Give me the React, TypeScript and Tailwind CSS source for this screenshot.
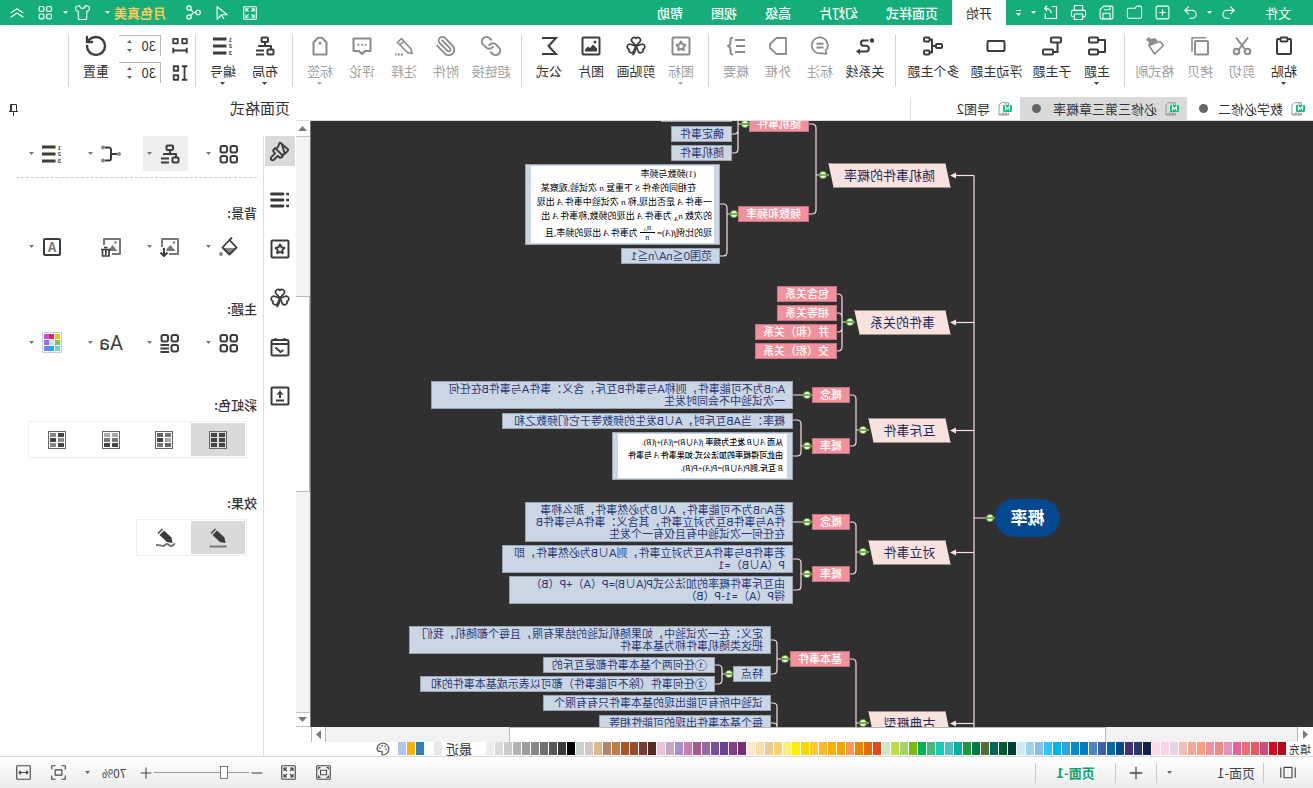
import { useState, type ReactNode } from "react";
import { Folder, Link, Paperclip, Palette, Printer, Redo2, RotateCw, Save, Shirt, SquarePlus, Undo2, Paintbrush } from "lucide-react";

/* ---------- icons ---------- */

function Glyph({ children, size = 20, width = 2 }: { children: ReactNode; size?: number; width?: number }) {
  return (
    <svg width={size} height={size} viewBox="0 0 20 20" fill="none" stroke="currentColor" strokeWidth={width} strokeLinejoin="round" aria-hidden="true">
      {children}
    </svg>
  );
}

function Caret({ className = "text-[#666]" }: { className?: string }) {
  return (
    <svg width="5" height="3" viewBox="0 0 5 3" className={className} aria-hidden="true">
      <path d="M0 0h5L2.5 3z" fill="currentColor" />
    </svg>
  );
}

const heart = "M10 9.8 6 5.600a2.600 2.600 0 0 1 4-3.300 2.600 2.600 0 0 1 4 3.300z";

const icons: Record<string, ReactNode> = {
  paste: <><rect x="3" y="3" width="14" height="15" rx="1" /><rect x="6.5" y="1.5" width="7" height="4" rx="1" fill="white" /></>,
  cut: <><path d="M4 1.5 13.5 14M16 1.5 6.5 14" /><circle cx="4.5" cy="15.5" r="2.8" /><circle cx="15.5" cy="15.5" r="2.8" /></>,
  copy: <><rect x="2" y="5" width="13" height="13.5" rx="1" /><path d="M4 1.8h14v14" strokeWidth="1.6" /></>,
  format: <><path d="M5 5.5 1.5 9.5l9 8.5L16 9.5z" strokeWidth="1.6" /><path d="m7 5 10 5-1-4 3-2-2.4-3L14 3l-4-1z" fill="currentColor" stroke="none" /></>,
  topic: <><rect x="9" y="1.5" width="9" height="5" rx="1" /><rect x="9" y="13.5" width="9" height="5" rx="1" /><path d="M9 4H2v12h7" /></>,
  subtopic: <><rect x="1" y="1.5" width="10" height="5" rx="1" /><rect x="9" y="13.5" width="10" height="5" rx="1" /><path d="M4.5 6.500v9.500H9" /></>,
  floating: <rect x="1.500" y="5" width="17" height="10" rx="1" />,
  multi: <><rect x="1" y="8" width="6" height="4" rx="1" /><path d="M7 10h4M13.500 3.500H11v13h2.500" /><rect x="13.500" y="1.500" width="5.500" height="4" rx="1" /><rect x="13.500" y="14.500" width="5.500" height="4" rx="1" /></>,
  relation: <><circle cx="3" cy="4.500" r="1.200" fill="currentColor" /><path d="M6.500 4.500h5a2.600 2.600 0 0 1 0 5.200H9a2.900 2.900 0 0 0 0 5.800h6" /><path d="m15 12.500 4 3-4 3z" fill="currentColor" stroke="none" /></>,
  callout: <><path d="M4.500 15a8 8 0 1 1 4 2.200L3.500 18z" strokeWidth="1.700" /><path d="M6.500 7.800h7M6.500 11.500h7" /></>,
  boundary: <path d="M2 2h9.500l6.500 6v4l-6.500 6H2z" strokeWidth="1.800" />,
  summary: <path d="M1 4h10M1 10h9M1 16h10M13 1.500c3 0 2.500 2 2.500 4.500s.5 3.500 2.500 4c-2 .5-2.500 1.500-2.500 4s.5 4.500-2.500 4.500" />,
  mark: <><rect x="1.500" y="1.500" width="17" height="17" rx="1" /><path d="m10 5.500 1.500 2.800 3 .6-2.100 2.200.4 3.100-2.800-1.300-2.800 1.300.4-3.100-2.100-2.200 3-.6z" /></>,
  clover: <g strokeWidth="1.700"><path d={heart} /><path d={heart} transform="rotate(-115 10 10)" /><path d={heart} transform="rotate(115 10 10)" /><path d="M10 10c0 4 .8 6.500 3.500 9" /></g>,
  picture: <><rect x="1.500" y="1.500" width="17" height="17" rx="1" /><path d="M4 15.500v-3l4-4 3 3.500 2-1.500 3 3v2z" fill="currentColor" stroke="none" /><circle cx="6" cy="6" r="1.500" fill="currentColor" stroke="none" /></>,
  formula: <path d="M17 2H3l7.500 8L3 18h14" strokeLinejoin="miter" />,
  note: <><path d="m12.500 2.500 4 4-10 10-4.500 1 1-4.500zM10 5l4 4" strokeWidth="1.700" /><path d="M11 18.500h8" strokeDasharray="2 1.200" /></>,
  comment: <><path d="M1.500 2.500h17V15H13l-3 3-3-3H1.500z" /><path d="M5.500 8.800h9" strokeDasharray="1.800 1.800" /></>,
  tag: <><path d="M3.500 6.500 8 1.800h4l4.500 4.700v12h-13z" /><circle cx="10" cy="7" r="1.600" fill="currentColor" stroke="none" /></>,
  layout: <><rect x="7" y="1.500" width="6.500" height="4.500" rx="1" /><path d="M10 6v4M4 13v-3h12v1M11 14.500h8M11 18.500h8" /><rect x="1.500" y="13.500" width="6" height="5" rx="1" /></>,
  numbering: <><path d="M6.500 3H20M6.500 10H20M6.500 17H20" strokeWidth="2.800" /><g fill="currentColor" stroke="none" fontSize="6" fontWeight="700" className="font-['Liberation_Sans',sans-serif]"><text x="1" y="5.500">1</text><text x="1" y="12">2</text><text x="1" y="18.500">3</text></g></>,
  gapX: <><rect x="2.500" y="2" width="5" height="5" /><rect x="12.500" y="2" width="5" height="5" /><path d="M2.500 12v6M17.500 12v6M2.500 15h15" /></>,
  gapY: <><rect x="12" y="2.500" width="5" height="5" /><rect x="12" y="12.500" width="5" height="5" /><path d="M2 2.500h6M2 17.500h6M5 2.500v15" /></>,
  grid: <><rect x="2" y="2" width="6.500" height="6.500" rx="2" /><rect x="12" y="2" width="6.500" height="6.500" rx="2" /><rect x="2" y="12" width="6.500" height="6.500" rx="2" /><rect x="12" y="12" width="6.500" height="6.500" rx="2" /></>,
  gridLines: <><rect x="2" y="2" width="6.500" height="6.500" rx="2" /><rect x="12" y="2" width="6.500" height="6.500" rx="2" /><rect x="2" y="12" width="6.500" height="6.500" rx="2" /><path d="M11 12h8.500M11 15.500h8.500M11 19h8.500" /></>,
  connector: <><path d="M4 10h5M16 3.500h-4a2 2 0 0 0-2 2v9a2 2 0 0 0 2 2h4" /><g fill="#888" stroke="none"><circle cx="2" cy="10" r="2" /><circle cx="18" cy="3.500" r="2" /><circle cx="18" cy="16.500" r="2" /></g></>,
  bullets: <><path d="M7 4h11.500M7 10h11.500M7 16h11.500" strokeWidth="2.800" strokeLinecap="round" /><path d="M1 4h2.800M1 10h2.800M1 16h2.800" strokeWidth="2.600" /></>,
  calendar: <><rect x="1.500" y="3" width="17" height="15.500" rx="1.500" /><path d="M5.500 1v3M14.500 1v3M2 7h16M6.500 13l3 2 5-4.500" /></>,
  upload: <><rect x="1.500" y="1.500" width="17" height="17" rx="1" /><path d="M6 14.500h8M10 12V7" /><path d="m6.500 8.500 3.500-4 3.500 4z" fill="currentColor" stroke="none" /></>,
  bucket: <><path d="M3 11h13l-6.500 6z" fill="#888" stroke="none" /><path d="m9.500 3 7 7.500-7 7-7-7zM9.500 3 7 .5" strokeWidth="1.800" /><circle cx="18" cy="17" r="2" fill="#888" stroke="none" /></>,
  imageDown: <><path d="M11 17H2V2h16v8" stroke="#777" /><path d="m4.500 14 5-6 4 4v2z" fill="#777" stroke="none" /><circle cx="6" cy="5.500" r="1.200" fill="#777" stroke="none" /><path d="M16 11v7M12.500 15.500 16 19l3.500-3.500" /></>,
  imageTrash: <><path d="M9 17H1V2h16v6" stroke="#777" /><path d="m3.500 14 5-6 3 4v2z" fill="#777" stroke="none" /><circle cx="5.500" cy="5.500" r="1.200" fill="#777" stroke="none" /><path d="M10.500 12.500h9.500M13.500 10.500h3.500M12 13v6h6.500v-6M15.200 13v5" strokeWidth="1.700" /></>,
  screenOut: <><rect x="1" y="1" width="18" height="18" rx="1" /><path d="M4 8V4h4M4 4l4 4M16 8V4h-4M16 4l-4 4M4 12v4h4M4 16l4-4M16 12v4h-4M16 16l-4-4" /></>,
  screenFit: <><rect x="1" y="1" width="18" height="18" rx="1" /><rect x="6" y="7" width="8" height="6" /><path d="M3.500 6V3.500H6M14 3.500h2.500V6M3.500 14v2.500H6M14 16.500h2.500V14" /></>,
  corners: <><path d="M1 6V1h5M14 1h5v5M1 14v5h5M14 19h5v-5" /><rect x="5.500" y="6.500" width="9" height="7" /></>,
  fitWidth: <><rect x="1" y="1" width="18" height="18" rx="1" /><path d="M4 10h12M6.500 7.500 4 10l2.500 2.500M13.500 7.500 16 10l-2.500 2.500" /></>,
  pageView: <><rect x="5" y="3" width="10" height="13" /><path d="M1 3v13M19 3v13" /></>,
  pointer: <path d="M17 1v18l-6-6.500H2.500zM11 12.500 7 18.500" />,
  share: <><circle cx="4" cy="10" r="3" /><circle cx="16" cy="4" r="2.800" /><circle cx="16" cy="16" r="2.800" /><path d="M7 10h3l3.500-4M10 10l3.500 4" /></>,
  collapse: <path d="m1 10 9-6 9 6M1 16l9-6 9 6" />,
  exportBox: <path d="M8 2H2v16h15v-7M9 11c0-4 3-6.500 9-6.500M14.500 1 18 4.500 14.500 8" />,
};

/* ---------- header ---------- */

const menuTabs = ["页面样式", "幻灯片", "高级", "视图", "帮助"];

function TitleBar() {
  return (
    <header className="h-[25px] shrink-0 flex items-center bg-[#16ae78] text-white text-[13px]">
      <button className="w-[70px] text-center">文件</button>
      <div className="flex items-center gap-[11px] pl-1.5">
        <button aria-label="撤销"><Undo2 size={17} strokeWidth={1.5} /></button>
        <Caret className="text-white -mx-[3px]" />
        <button aria-label="重做"><Redo2 size={17} strokeWidth={1.5} /></button>
        <button aria-label="新建"><SquarePlus size={17} strokeWidth={1.5} /></button>
        <button aria-label="打开"><Folder size={17} strokeWidth={1.5} /></button>
        <button aria-label="保存"><Save size={17} strokeWidth={1.5} /></button>
        <button aria-label="打印"><Printer size={17} strokeWidth={1.5} /></button>
        <button className="px-px" aria-label="导出"><Glyph size={15} width={1.6}>{icons.exportBox}</Glyph></button>
      </div>
      <div className="flex items-center gap-2.5 pl-1.5 pr-2.5">
        <Caret className="text-white" />
        <span className="flex flex-col items-center gap-0.5">
          <span className="w-[5px] h-px bg-white" />
          <Caret className="text-white" />
        </span>
      </div>
      <button className="h-full w-[54px] bg-white text-[#333]">开始</button>
      <nav className="flex items-center gap-7 pl-[14px] font-medium">
        {menuTabs.map((t) => <button key={t}>{t}</button>)}
      </nav>
      <div className="ml-auto flex items-center gap-[14px] pr-2.5">
        <button aria-label="全屏"><Glyph size={14} width={1.5}>{icons.screenOut}</Glyph></button>
        <button aria-label="演示"><Glyph size={14} width={1.6}>{icons.pointer}</Glyph></button>
        <button aria-label="分享"><Glyph size={15} width={1.6}>{icons.share}</Glyph></button>
        <button className="flex items-center gap-1 pl-1.5 font-bold text-[#f8c95c]">月色真美<Caret className="text-white" /></button>
        <div className="flex items-center gap-2.5">
          <button className="flex items-center gap-1.5" aria-label="主题皮肤"><Shirt size={17} strokeWidth={1.5} /><Caret className="text-white" /></button>
          <button aria-label="应用"><Glyph size={15} width={1.6}>{icons.grid}</Glyph></button>
        </div>
        <button aria-label="收起"><Glyph size={14} width={1.6}>{icons.collapse}</Glyph></button>
      </div>
    </header>
  );
}

/* ---------- ribbon ---------- */

type Tool = { label: string; icon: ReactNode; off?: boolean; menu?: boolean };

const g = (name: string) => <Glyph>{icons[name]}</Glyph>;

const toolGroups: Tool[][] = [
  [
    { label: "粘贴", icon: g("paste"), menu: true },
    { label: "剪切", icon: g("cut"), off: true },
    { label: "拷贝", icon: g("copy"), off: true },
    { label: "格式刷", icon: g("format"), off: true },
  ],
  [
    { label: "主题", icon: g("topic"), menu: true },
    { label: "子主题", icon: g("subtopic") },
    { label: "浮动主题", icon: g("floating") },
    { label: "多个主题", icon: g("multi") },
  ],
  [
    { label: "关系线", icon: g("relation") },
    { label: "标注", icon: g("callout"), off: true },
    { label: "外框", icon: g("boundary"), off: true },
    { label: "概要", icon: g("summary"), off: true },
  ],
  [
    { label: "图标", icon: g("mark"), off: true, menu: true },
    { label: "剪贴画", icon: g("clover") },
    { label: "图片", icon: g("picture") },
    { label: "公式", icon: g("formula") },
  ],
  [
    { label: "超链接", icon: <Link size={22} strokeWidth={2.2} />, off: true },
    { label: "附件", icon: <Paperclip size={22} strokeWidth={2} />, off: true },
    { label: "注释", icon: g("note"), off: true },
    { label: "评论", icon: g("comment"), off: true },
    { label: "标签", icon: g("tag"), off: true, menu: true },
  ],
  [
    { label: "布局", icon: g("layout"), menu: true },
    { label: "编号", icon: g("numbering"), menu: true },
  ],
];

const toolWidth = ["", "", "w-[42px]", "w-12", "w-[63px]"];

function ToolButton({ tool }: { tool: Tool }) {
  return (
    <button className={`${toolWidth[tool.label.length]} shrink-0 flex flex-col items-center pt-[11px] ${tool.off ? "text-[#8c8c8c]" : "text-[#3c3c3c]"}`}>
      <span className="h-5 flex items-center">{tool.icon}</span>
      <span className={`mt-1.5 text-[13px] leading-[18px] whitespace-nowrap ${tool.off ? "text-[#a0a0a0]" : "text-[#333]"}`}>{tool.label}</span>
      {tool.menu && <span className="mt-0.5"><Caret className={tool.off ? "text-[#aaa]" : "text-[#444]"} /></span>}
    </button>
  );
}

const Divider = () => <span className="mx-1.5 mt-2.5 h-[52px] w-px shrink-0 bg-[#d4d4d4]" />;

function SpacingField({ icon, label }: { icon: string; label: string }) {
  const [value, setValue] = useState("30");
  return (
    <label className="flex items-center gap-2.5 h-[27px] text-[#3c3c3c]">
      <Glyph size={18}>{icons[icon]}</Glyph>
      <span className="flex items-center w-[42px] h-[21px] border-t border-l border-[#b8b8b8]">
        <input aria-label={label} value={value} onChange={(e) => setValue(e.target.value)} className="w-7 pl-1 text-[13px] leading-5 text-[#333] bg-transparent outline-none" />
        <span className="flex flex-col gap-1.5">
          <span className="rotate-180 flex"><Caret /></span>
          <Caret />
        </span>
      </span>
    </label>
  );
}

function Ribbon() {
  return (
    <div className="h-[70px] shrink-0 flex items-start bg-white pl-2 overflow-hidden">
      {toolGroups.map((group, i) => (
        <div key={i} className="flex items-start">
          {group.map((t) => <ToolButton key={t.label} tool={t} />)}
          <Divider />
        </div>
      ))}
      <div className="pt-[7px] flex flex-col">
        <SpacingField icon="gapX" label="水平间距" />
        <SpacingField icon="gapY" label="垂直间距" />
      </div>
      <div className="flex items-start pl-0.5">
        <ToolButton tool={{ label: "重置", icon: <RotateCw size={24} strokeWidth={2.4} /> }} />
        <Divider />
      </div>
    </div>
  );
}

/* ---------- document tabs ---------- */

const docs = [
  { name: "数学必修二", dirty: true },
  { name: "必修三第三章概率", dirty: true, active: true },
  { name: "导图2" },
];

function DocIcon() {
  return (
    <svg width="14" height="14" viewBox="0 0 14 14" aria-hidden="true">
      <path d="M3.500 3V.7h7L13 3v10H3.500v-2M6 .7v12M9 10v3M3.500 12h9" fill="none" stroke="#999" />
      <rect x="0" y="3" width="9" height="7" rx="1" fill="#10c17c" />
      <path d="M2.500 8.500v-4L4.500 7l2-2.500v4" fill="none" stroke="white" strokeWidth="1.200" />
    </svg>
  );
}

function DocTabs() {
  return (
    <div className="h-[26px] shrink-0 flex items-end bg-white border-b border-[#dcdcdc] text-[13px] text-[#333]">
      {docs.map((d) => (
        <button key={d.name} className={`h-[23px] flex items-center pl-2 pr-3 ${d.active ? "bg-[#dadada] w-[167px]" : d.dirty ? "w-[126px]" : "w-[110px] border-r border-[#dcdcdc]"}`}>
          <DocIcon />
          <span className="pl-2 leading-[22px] whitespace-nowrap">{d.name}</span>
          {d.dirty && <span className="ml-auto size-[9px] rounded-full bg-[#666]" />}
        </button>
      ))}
    </div>
  );
}

/* ---------- mind map ---------- */

const branches = [
  { text: "随机事件的概率", y: 42, w: 121 },
  { text: "事件的关系", y: 189, w: 95 },
  { text: "互斥事件", y: 297, w: 81 },
  { text: "对立事件", y: 419, w: 81 },
  { text: "古典概型", y: 590, w: 81 },
];

const pinkNodes = [
  { text: "随机事件", x: 504, y: -5 },
  { text: "频数和频率", x: 504, y: 85 },
  { text: "包含关系", x: 476, y: 165 },
  { text: "相等关系", x: 476, y: 184 },
  { text: "并（和）关系", x: 476, y: 203 },
  { text: "交（积）关系", x: 476, y: 222 },
  { text: "概念", x: 463, y: 266 },
  { text: "概率", x: 463, y: 317 },
  { text: "概念", x: 463, y: 393 },
  { text: "概率", x: 463, y: 445 },
  { text: "基本事件", x: 463, y: 530 },
];

const leafNodes = [
  { text: "", x: 581, y: -3, w: 71 },
  { text: "确定事件", x: 581, y: 5, w: 61 },
  { text: "随机事件", x: 581, y: 24, w: 61 },
  { text: "范围0≦nA/n≦1", x: 593, y: 127, w: 99 },
  { text: "A∩B为不可能事件，则称A与事件B互斥，含义：事件A与事件B在任何\n一次试验中不会同时发生", x: 520, y: 260, w: 362 },
  { text: "概率：当AB互斥时，A∪B发生的频数等于它们频数之和", x: 520, y: 292, w: 291 },
  { text: "若A∩B为不可能事件，A∪B为必然事件，那么称事\n件A与事件B互为对立事件，其含义：事件A与事件B\n在任何一次试验中有且仅有一个发生", x: 520, y: 381, w: 268 },
  { text: "若事件B与事件A互为对立事件，则A∪B为必然事件，即\nP（A∪B）=1", x: 520, y: 424, w: 291 },
  { text: "由互斥事件概率的加法公式P(A∪B)=P（A）+P（B）\n得P（A）=1-P（B）", x: 520, y: 455, w: 284 },
  { text: "定义：在一次试验中，如果随机试验的结果有限，且每个都随机，我们\n把这类随机事件称为基本事件", x: 542, y: 505, w: 362 },
  { text: "特点", x: 542, y: 545, w: 38 },
  { text: "①任何两个基本事件都是互斥的", x: 598, y: 536, w: 172 },
  { text: "②任何事件（除不可能事件）都可以表示成基本事件的和", x: 598, y: 555, w: 295 },
  { text: "试验中所有可能出现的基本事件只有有限个", x: 542, y: 574, w: 228 },
  { text: "每个基本事件出现的可能性相等", x: 542, y: 594, w: 172 },
];

// from: x of the stem start, bar: x of the vertical bar, to: x of the child edge
const brackets = [
  { from: 484, y: 54, bar: 497, to: 504, ys: [3, 93] },
  { from: 458, y: 201, bar: 471, to: 476, ys: [173, 192, 211, 230] },
  { from: 444, y: 309, bar: 457, to: 463, ys: [274, 325] },
  { from: 444, y: 431, bar: 457, to: 463, ys: [401, 453] },
  { from: 444, y: 602, bar: 457, to: 463, ys: [538, 700] },
  { from: 564, y: 3, bar: 575, to: 581, ys: [-7, 13, 32] },
  { from: 575, y: 93, bar: 586, to: 593, ys: [83, 135] },
  { from: 501, y: 325, bar: 512, to: 520, ys: [299, 335] },
  { from: 501, y: 453, bar: 512, to: 520, ys: [438, 469] },
  { from: 523, y: 538, bar: 536, to: 542, ys: [519, 553] },
  { from: 580, y: 553, bar: 591, to: 598, ys: [544, 563] },
  { from: 530, y: 660, bar: 536, to: 542, ys: [582, 602, 700] },
];

const toggles = [
  [323, 397], [490, 54], [463, 201], [450, 309], [450, 431], [450, 602],
  [568, 3], [579, 93], [506, 274], [506, 325], [506, 401], [506, 453], [528, 538], [584, 553],
];

function bracketPath(b: (typeof brackets)[number]) {
  const arms = b.ys.map((y) => {
    const r = y < b.y ? 4 : -4;
    return `M${b.bar} ${b.y}V${y + r}Q${b.bar} ${y} ${b.bar + 4} ${y}H${b.to}`;
  });
  return `M${b.from} ${b.y}H${b.bar}${arms.join("")}`;
}

function Connectors() {
  return (
    <svg className="absolute left-0 top-0 h-full w-full" fill="none" stroke="#fbdde4" strokeWidth="1.200" aria-hidden="true">
      <path d="M318 397H339M339 720V54.500M501 274H520M501 401H520" />
      {brackets.map((b, i) => <path key={i} d={bracketPath(b)} />)}
      {branches.map((b) => (
        <g key={b.text}>
          <path d={`M339 ${b.y + 12.5}h18`} />
          <path d={`M363 ${b.y + 12.5}l-6-3v6z`} fill="#fbdde4" stroke="none" />
        </g>
      ))}
    </svg>
  );
}

function Toggles() {
  return (
    <svg className="absolute left-0 top-0 h-full w-full pointer-events-none" aria-hidden="true">
      {toggles.map(([x, y]) => (
        <g key={`${x}-${y}`}>
          <circle cx={x} cy={y} r="3.600" fill="#eef7e6" stroke="#4f9e1c" />
          <path d={`M${x - 3.5} ${y}h7`} stroke="#3f9410" strokeWidth="1.400" />
        </g>
      ))}
    </svg>
  );
}

function MindMap() {
  return (
    <main className="relative flex-1 min-w-0 overflow-hidden bg-[#303030] font-[Lato,'Noto_Sans_CJK_SC',sans-serif]">
      <Connectors />
      <div className="absolute left-[253px] top-[378px] w-[65px] h-[38px] rounded-full bg-[#04498f] text-white text-[17px] leading-[37px] font-bold text-center">概率</div>
      {branches.map((b) => (
        <div key={b.text} className="absolute h-[25px] text-[13px] leading-6 text-center text-[#1c2a5c]" style={{ left: 363, top: b.y, width: b.w }}>
          <div className="absolute inset-y-0 inset-x-[2px] -skew-x-12 bg-[#f8e2de] border-y border-[#9c8c8c]" />
          <span className="relative">{b.text}</span>
        </div>
      ))}
      {pinkNodes.map((n) => (
        <div key={`${n.x}-${n.y}`} className="absolute h-4 px-[7px] border border-[#c0757f] bg-[#f2919c] text-white text-[11px] leading-[14px] font-medium whitespace-nowrap" style={{ left: n.x, top: n.y }}>
          {n.text}
        </div>
      ))}
      {leafNodes.map((n) => (
        <div key={`${n.x}-${n.y}`} className="absolute px-[7px] py-px border border-[#98a4b2] bg-[#cad6e3] text-[#2c3676] text-[11px] leading-[12px] whitespace-pre" style={{ left: n.x, top: n.y, width: n.w }}>
          {n.text}
        </div>
      ))}

      {/* textbook clippings */}
      <div className="absolute left-[593px] top-[43px] w-[195px] h-[81px] bg-[#cad6e3] border border-[#98a4b2] px-[5px] py-px">
        <div className="h-full overflow-hidden bg-white pl-0.5 pt-px text-black text-[9px] leading-[14px] whitespace-nowrap font-['Liberation_Serif','Noto_Sans_CJK_SC',serif]">
          <p className="pl-4">(1)频数与频率</p>
          <p className="pl-4">在相同的条件 <i>S</i> 下重复 <i>n</i> 次试验,观察某</p>
          <p>一事件 <i>A</i> 是否出现,称 <i>n</i> 次试验中事件 <i>A</i> 出现</p>
          <p>的次数 <i>n</i><sub className="text-[6px]">A</sub> 为事件 <i>A</i> 出现的频数,称事件 <i>A</i> 出</p>
          <p className="flex items-center">
            现的比例 <i>f</i>(<i>A</i>)=
            <span className="flex flex-col items-center px-0.5 text-[8px] leading-[9px] italic">
              <span className="border-b border-black px-1">n<sub className="text-[5px]">A</sub></span>
              <span>n</span>
            </span>
            为事件 <i className="px-0.5">A</i> 出现的频率,且
          </p>
        </div>
      </div>
      <div className="absolute left-[520px] top-[311px] w-[181px] h-[48px] bg-[#cad6e3] border border-[#98a4b2] px-[5px] py-px">
        <div className="h-full overflow-hidden bg-white pl-1 pt-0.5 text-black text-[8px] leading-[13px] font-medium whitespace-nowrap font-['Liberation_Serif','Noto_Sans_CJK_SC',serif]">
          <p>从而 <i>A</i>∪<i>B</i> 发生为频率 <i>f</i>(<i>A</i>∪<i>B</i>)=<i>f</i>(<i>A</i>)+<i>f</i>(<i>B</i>).</p>
          <p>由此可得概率的加法公式:如果事件 <i>A</i> 与事件</p>
          <p><i>B</i> 互斥,则<i>P</i>(<i>A</i>∪<i>B</i>)=<i>P</i>(<i>A</i>)+<i>P</i>(<i>B</i>).</p>
        </div>
      </div>
      <Toggles />
    </main>
  );
}

/* ---------- scrollbars ---------- */

function VerticalScroll() {
  return (
    <div className="w-[15px] shrink-0 flex flex-col border-l border-[#777] bg-[#f2f2f2]">
      <div className="h-[15px] flex items-center justify-center bg-white text-[#777]">
        <svg width="9" height="5"><path d="M0 5h9L4.500 0z" fill="currentColor" /></svg>
      </div>
      <div className="grow-[160] basis-0 border-t border-[#c4c4c4]" />
      <div className="grow-[195] basis-0 bg-white border-y border-l border-[#b8b8b8]" />
      <div className="grow-[221] basis-0" />
      <div className="h-[15px] flex items-center justify-center bg-white border-y border-[#c4c4c4] text-[#777]">
        <svg width="9" height="5"><path d="M0 0h9L4.500 5z" fill="currentColor" /></svg>
      </div>
    </div>
  );
}

function HorizontalScroll() {
  return (
    <div className="h-[15px] shrink-0 flex mr-[15px] bg-[#f2f2f2]">
      <div className="w-4 flex items-center justify-center bg-white border-r border-[#b8b8b8] text-[#777]">
        <svg width="5" height="9"><path d="M5 0v9L0 4.500z" fill="currentColor" /></svg>
      </div>
      <div className="grow-[191] basis-0" />
      <div className="grow-[597] basis-0 bg-white border-t border-x border-[#b8b8b8]" />
      <div className="grow-[183] basis-0" />
      <div className="w-[15px] flex items-center justify-center bg-white border-x border-[#b8b8b8] text-[#777]">
        <svg width="5" height="9"><path d="M0 0v9l5-4.500z" fill="currentColor" /></svg>
      </div>
    </div>
  );
}

/* ---------- colour strip ---------- */

const swatches = (
  "b30a1c d90a20 c94f7c ee5566 f06d72 ec5f9f e295b8 ee8a84 f0909c ff9f77 eeaa94 f4bcb8 e9d2e8 fdd3e6 fddde4 " +
  "12224f 24396e 44307a 054a90 006aa8 3c5fae 5080c8 007ccc 008ccb 2aa5e0 00b5ef 30c4f8 88bfe8 9cd6ec cdeaf5 " +
  "014034 005a32 00665e 556e2e 007b45 1b9840 00b0a0 50bfc0 15ccb4 48ba80 00b255 7cba10 a4d468 c0da40 cbe7c8 " +
  "e04a20 e96b00 f08300 f49a55 f0a800 fbb000 fdb832 f9ca30 fdd800 fff000 fbf07e fdd172 e8cb95 fddba8 fce8d0 " +
  "762f70 834088 694298 765098 9868a0 a45c8e d07cb0 a890d0 c8a8c8 ecc2dc " +
  "562a1c 783c34 964e2c ab5624 c07c42 b5846c dfb888 d3c8c4 c8d4cb " +
  "000000 3c3838 585858 707070 888888 9c9c9c b0b4b2 cacccb dadada ececec"
).split(" ");

const recent = ["2e80c0", "fdb000", "a9c8ea"];

function Swatch({ hex }: { hex: string }) {
  return <button aria-label={`#${hex}`} className="w-2 h-[13px] shrink-0" style={{ backgroundColor: `#${hex}` }} />;
}

function ColorStrip() {
  return (
    <div className="h-[14px] shrink-0 flex items-start bg-white text-[#333] overflow-hidden">
      <span className="w-[27px] shrink-0 pl-0.5 text-[11px] leading-[14px]">填充</span>
      <div className="flex gap-px">
        {swatches.map((c, i) => <Swatch key={i} hex={c} />)}
      </div>
      <span className="pl-[14px] pr-1 text-[13px] leading-[14px] whitespace-nowrap">最近</span>
      <Swatch hex="e8e8e8" />
      <div className="flex gap-px pl-2.5">
        {recent.map((c) => <Swatch key={c} hex={c} />)}
      </div>
      <button aria-label="更多颜色" className="pl-2 text-[#666]"><Palette size={14} strokeWidth={2.4} /></button>
    </div>
  );
}

/* ---------- format panel ---------- */

const sideTabs: ReactNode[] = [
  <Paintbrush size={21} strokeWidth={2.2} className="rotate-90" />, g("bullets"), g("mark"), g("clover"), g("calendar"), g("upload"),
];

function MenuIcon({ children, active, menu = true, label }: { children: ReactNode; active?: boolean; menu?: boolean; label: string }) {
  return (
    <button aria-label={label} className={`w-[45px] h-[35px] flex items-center gap-2 pl-2 ${active ? "bg-[#eee]" : ""}`}>
      <span className="w-5 flex justify-center">{children}</span>
      {menu && <Caret className="text-[#777]" />}
    </button>
  );
}

const paletteDots = ["#f2c500", "#e0264f", "#c44fd0", "#6fcf3a", "#dcdcdc", "#9370f0", "#6ecfe0", "#00b8f5", "#7484ff"];

function PaletteGrid() {
  return (
    <span className="grid grid-cols-3 gap-px p-px border border-[#c9cfdc] bg-white">
      {paletteDots.map((c) => <span key={c} className="w-[5px] h-[5px]" style={{ backgroundColor: c }} />)}
    </span>
  );
}

const rainbow = [
  ["#444", "#444", "#444", "#444", "#444", "#444"],
  ["#777", "#666", "#aaa", "#444", "#666", "#777"],
  ["#aaa", "#aaa", "#777", "#777", "#444", "#444"],
  ["#444", "#888", "#888", "#444", "#444", "#888"],
];

function RainbowIcon({ cells }: { cells: string[] }) {
  return (
    <svg width="18" height="18" viewBox="0 0 18 18" aria-hidden="true">
      <rect x=".5" y=".5" width="17" height="17" fill="none" stroke="#666" />
      {cells.map((c, i) => <rect key={i} x={i % 2 ? 10 : 2} y={2 + Math.floor(i / 2) * 5} width="6" height="4" fill={c} />)}
    </svg>
  );
}

const SectionLabel = ({ children }: { children: ReactNode }) => <h3 className="pl-1.5 mt-[35px] mb-1.5 text-[13px] leading-5 font-medium text-[#333]">{children}</h3>;

function FormatPanel() {
  const [mode, setMode] = useState(0);
  const [effect, setEffect] = useState(0);
  return (
    <aside className="w-[296px] shrink-0 flex flex-col bg-white text-[#3c3c3c]">
      <div className="h-[26px] flex items-center justify-between pl-1.5 pr-2">
        <h2 className="text-[15px] leading-[26px] text-[#333]">页面格式</h2>
        <button aria-label="固定" className="pt-1">
          <svg width="11" height="12" viewBox="0 0 11 12" fill="none" stroke="#333"><path d="M2.500.5v7M1 7.500h9M7.500.5v7M2.500.5h6v7M5.500 7.500V12" /><path d="M8 .5v7" strokeWidth="1.500" /></svg>
        </button>
      </div>
      <div className="flex-1 flex">
        <div className="w-[33px] mt-[15px] flex flex-col items-center gap-[19px] border-r border-[#dcdcdc]">
          {sideTabs.map((icon, i) => (
            <button key={i} aria-label={`面板 ${i + 1}`} className={`w-[30px] h-[30px] flex items-center justify-center ${i === 0 ? "bg-[#dadada]" : ""}`}>{icon}</button>
          ))}
        </div>
        <div className="flex-1 pt-[15px]">
          <div className="ml-4 flex gap-[14px]">
            <MenuIcon label="样式">{g("grid")}</MenuIcon>
            <MenuIcon label="布局" active>{g("layout")}</MenuIcon>
            <MenuIcon label="连接线">{g("connector")}</MenuIcon>
            <MenuIcon label="编号">{g("numbering")}</MenuIcon>
          </div>
          <div className="ml-1.5 mr-4 mt-1.5 -mb-2.5 border-t border-dashed border-[#c8c8c8]" />
          <SectionLabel>背景:</SectionLabel>
          <div className="ml-4 flex gap-[14px]">
            <MenuIcon label="填充">{g("bucket")}</MenuIcon>
            <MenuIcon label="插入背景">{g("imageDown")}</MenuIcon>
            <MenuIcon label="删除背景" menu={false}>{g("imageTrash")}</MenuIcon>
            <MenuIcon label="水印">
              <span className="size-[18px] border-2 border-[#3c3c3c] rounded-xs text-[13px] leading-[14px] font-bold text-[#777] text-center">A</span>
            </MenuIcon>
          </div>
          <SectionLabel>主题:</SectionLabel>
          <div className="ml-4 flex gap-[14px]">
            <MenuIcon label="主题样式">{g("grid")}</MenuIcon>
            <MenuIcon label="主题列表">{g("gridLines")}</MenuIcon>
            <MenuIcon label="字体"><span className="text-xl leading-5 font-[Roboto,sans-serif]">Aa</span></MenuIcon>
            <MenuIcon label="配色"><PaletteGrid /></MenuIcon>
          </div>
          <SectionLabel>彩虹色:</SectionLabel>
          <div className="ml-4 w-[219px] h-[37px] p-px flex border border-[#efefef]">
            {rainbow.map((cells, i) => (
              <button key={i} aria-label={`彩虹色 ${i + 1}`} onClick={() => setMode(i)} className={`flex-1 flex items-center justify-center ${mode === i ? "bg-[#dadada]" : ""}`}>
                <RainbowIcon cells={cells} />
              </button>
            ))}
          </div>
          <SectionLabel>效果:</SectionLabel>
          <div className="ml-4 w-[111px] h-[37px] p-px flex border border-[#efefef]">
            {["M1.500 18.500h17", "M0 16c2 0 2 2 4 2s2-2 4-2 2 2 4 2 2-1 7-1"].map((line, i) => (
              <button key={line} aria-label={`效果 ${i + 1}`} onClick={() => setEffect(i)} className={`flex-1 flex items-center justify-center ${effect === i ? "bg-[#dadada]" : ""}`}>
                <Glyph>
                  <path d={line} stroke="#777" />
                  <path d="m2.500 15 1-5.500 7.500-7 4.500 4.500L8 14zM12 1.500l1-1 4.500 4.500-1 1z" fill="currentColor" stroke="none" />
                </Glyph>
              </button>
            ))}
          </div>
        </div>
      </div>
    </aside>
  );
}

/* ---------- status bar ---------- */

function StatusBar() {
  const [zoom, setZoom] = useState(70);
  return (
    <footer className="h-8 shrink-0 flex items-center border-t border-[#d8d8d8] bg-linear-to-b from-white to-[#ebebeb] text-[13px] text-[#444]">
      <button aria-label="页面视图" className="w-[49px] flex justify-center"><Glyph size={16} width={1.4}>{icons.pageView}</Glyph></button>
      <button className="w-[107px] h-5 flex items-center justify-between pl-2 pr-2.5 border-l border-[#c8c8c8]">页面-1<Caret /></button>
      <button aria-label="添加页面" className="w-[42px] h-5 flex items-center justify-center border-x border-[#c8c8c8]"><Glyph size={14} width={1.8}><path d="M10 1v18M1 10h18" /></Glyph></button>
      <button className="w-20 h-5 leading-5 border-r border-[#c8c8c8] font-bold text-[#16a070]">页面-1</button>
      <div className="ml-auto flex items-center pr-4">
        <button aria-label="适应页面" className="mr-5"><Glyph size={15} width={1.5}>{icons.screenFit}</Glyph></button>
        <button aria-label="全屏" className="mr-[18px]"><Glyph size={15} width={1.5}>{icons.screenOut}</Glyph></button>
        <button aria-label="缩小"><Glyph size={12} width={1.8}><path d="M1 10h18" /></Glyph></button>
        <input
          type="range"
          aria-label="缩放"
          min={40}
          max={160}
          value={zoom}
          onChange={(e) => setZoom(Number(e.target.value))}
          className="mx-0.5 w-[95px] h-4 appearance-none bg-[linear-gradient(#999,#999)] bg-size-[100%_1px] bg-center bg-no-repeat [&::-webkit-slider-thumb]:appearance-none [&::-webkit-slider-thumb]:w-2 [&::-webkit-slider-thumb]:h-[13px] [&::-webkit-slider-thumb]:bg-white [&::-webkit-slider-thumb]:border [&::-webkit-slider-thumb]:border-[#777]"
        />
        <button aria-label="放大"><Glyph size={12} width={1.8}><path d="M10 1v18M1 10h18" /></Glyph></button>
        <button className="ml-3.5 mr-[19px] flex items-center gap-3 text-xs">{zoom}%<Caret /></button>
        <button aria-label="居中" className="mr-5"><Glyph size={15} width={1.5}>{icons.corners}</Glyph></button>
        <button aria-label="适应宽度"><Glyph size={15} width={1.5}>{icons.fitWidth}</Glyph></button>
      </div>
    </footer>
  );
}

export default function App() {
  // the whole window is flipped horizontally
  return (
    <div className="h-screen flex flex-col overflow-hidden bg-white -scale-x-100 font-['Noto_Sans_CJK_SC',sans-serif]">
      <TitleBar />
      <Ribbon />
      <div className="flex-1 min-h-0 flex">
        <div className="flex-1 min-w-0 flex flex-col">
          <DocTabs />
          <div className="flex-1 min-h-0 flex">
            <MindMap />
            <VerticalScroll />
          </div>
          <HorizontalScroll />
          <ColorStrip />
        </div>
        <FormatPanel />
      </div>
      <StatusBar />
    </div>
  );
}
